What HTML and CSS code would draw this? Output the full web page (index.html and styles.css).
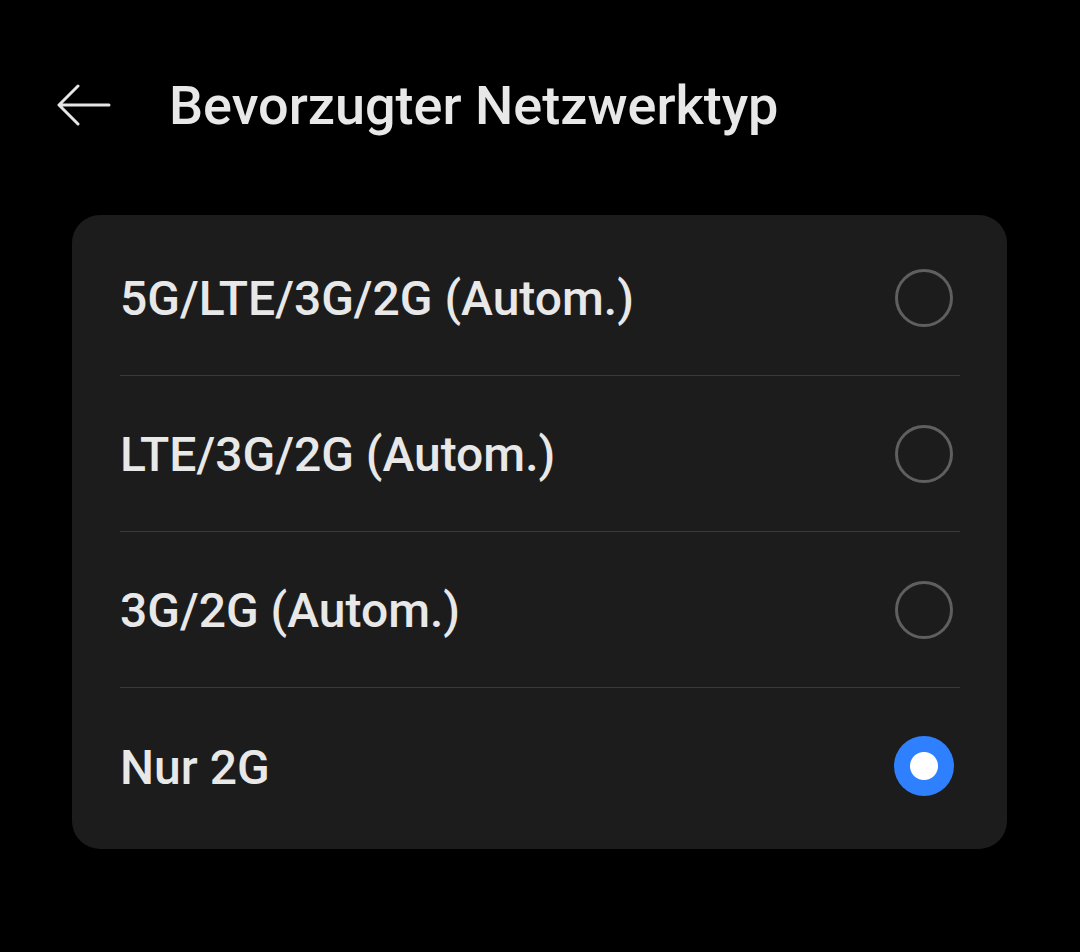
FILE: index.html
```html
<!DOCTYPE html>
<html>
	<head>
		<title>Bevorzugter Netzwerktyp</title>
		<link rel="stylesheet" href="styles.css">
	</head>
	<body>
		<div class="header">
			<svg class="back" width="54" height="42" viewBox="0 0 54 42">
				<path d="M52 21 H3 M21 2 L2 21 L21 40" fill="none" stroke="#e6e6e6" stroke-width="3" stroke-linecap="round" stroke-linejoin="round"/>
			</svg>
			<h1>Bevorzugter Netzwerktyp</h1>
		</div>

		<div class="card">
			<div class="row">
				<span class="label">5G/LTE/3G/2G (Autom.)</span>
				<span class="radio"></span>
			</div>
			<div class="row">
				<span class="label">LTE/3G/2G (Autom.)</span>
				<span class="radio"></span>
			</div>
			<div class="row">
				<span class="label">3G/2G (Autom.)</span>
				<span class="radio"></span>
			</div>
			<div class="row">
				<span class="label">Nur 2G</span>
				<span class="radio checked"></span>
			</div>
		</div>
	</body>
</html>
```

FILE: styles.css
```css
body {
	margin: 0;
	background: #000;
	color: #e8e8e8;
	font-family: Roboto, "Noto Sans", sans-serif;
	width: 1080px;
	height: 952px;
}
.header {
	display: flex;
	align-items: center;
	height: 210px;
	padding-left: 57px;
	box-sizing: border-box;
}
.back {
	flex: none;
}
.header h1 {
	margin: 0 0 0 58px;
	font-size: 54px;
	font-weight: 500;
	color: #e8e8e8;
}
.card {
	margin: 5px 73px 0 72px;
	background: #1c1c1c;
	border-radius: 28px;
	padding: 5px 0;
}
.row {
	display: flex;
	align-items: center;
	justify-content: space-between;
	height: 156px;
	margin: 0 47px 0 48px;
	box-sizing: border-box;
	border-bottom: 1px solid #3a3a3a;
}
.row:last-child {
	border-bottom: none;
}
.label {
	font-size: 48px;
	font-weight: 500;
	padding-top: 2px;
}
.radio {
	width: 52px;
	height: 52px;
	border: 3px solid #5f5f5f;
	border-radius: 50%;
	margin-right: 7px;
	box-sizing: content-box;
}
.radio.checked {
	border: none;
	width: 60px;
	height: 60px;
	margin-right: 6px;
	background: radial-gradient(circle, #fff 0 13.5px, #2f80ff 14.5px);
}
```
